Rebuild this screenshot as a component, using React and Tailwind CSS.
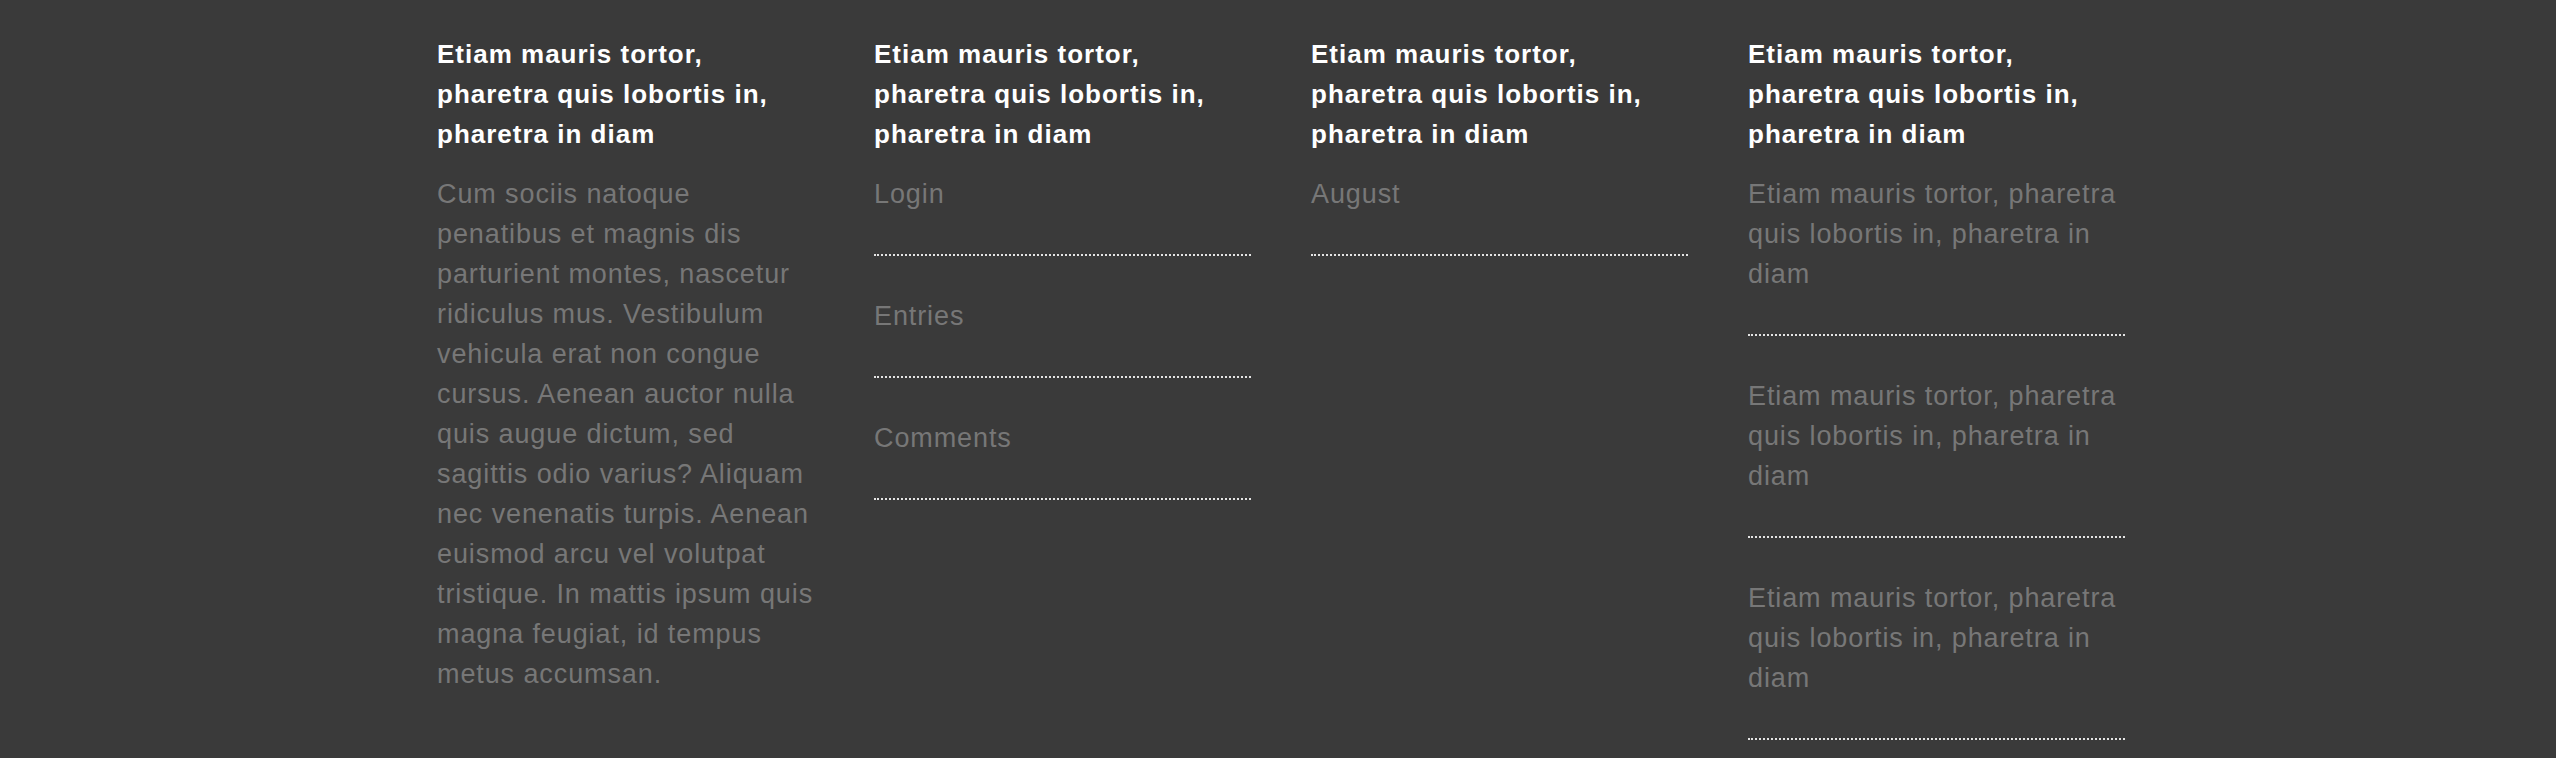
import React from 'react';

const heading = 'Etiam mauris tortor, pharetra quis lobortis in, pharetra in diam';

const intro =
  'Cum sociis natoque penatibus et magnis dis parturient montes, nascetur ridiculus mus. Vestibulum vehicula erat non congue cursus. Aenean auctor nulla quis augue dictum, sed sagittis odio varius? Aliquam nec venenatis turpis. Aenean euismod arcu vel volutpat tristique. In mattis ipsum quis magna feugiat, id tempus metus accumsan.';

const metaLinks = ['Login', 'Entries', 'Comments'];
const archives = ['August'];
const recentPosts = [
  'Etiam mauris tortor, pharetra quis lobortis in, pharetra in diam',
  'Etiam mauris tortor, pharetra quis lobortis in, pharetra in diam',
  'Etiam mauris tortor, pharetra quis lobortis in, pharetra in diam',
];

const WidgetTitle = ({ children }) => (
  <h3 className="text-[26px] leading-[40px] tracking-[1px] font-bold text-white mb-5">
    {children}
  </h3>
);

const LinkList = ({ items }) => (
  <ul>
    {items.map((item, i) => (
      <li
        key={i}
        className="pb-10 mb-10 border-b-2 border-dotted border-[#e4e4e4] text-[#777777]"
      >
        <a href="#">{item}</a>
      </li>
    ))}
  </ul>
);

const App = () => {
  return (
    <div
      className="min-h-screen bg-[#3a3a3a] text-[27px] leading-[40px] tracking-[0.9px]"
      style={{ fontFamily: '"Liberation Sans", Arial, sans-serif' }}
    >
      <footer className="flex justify-center pt-[34px] pl-[6px]">
        <div className="grid grid-cols-[repeat(4,377px)] gap-x-[60px]">
          {/* About */}
          <div>
            <WidgetTitle>{heading}</WidgetTitle>
            <p className="text-[#777777]">{intro}</p>
          </div>

          {/* Meta */}
          <div>
            <WidgetTitle>{heading}</WidgetTitle>
            <LinkList items={metaLinks} />
          </div>

          {/* Archives */}
          <div>
            <WidgetTitle>{heading}</WidgetTitle>
            <LinkList items={archives} />
          </div>

          {/* Recent posts */}
          <div>
            <WidgetTitle>{heading}</WidgetTitle>
            <LinkList items={recentPosts} />
          </div>
        </div>
      </footer>
    </div>
  );
};

export default App;
